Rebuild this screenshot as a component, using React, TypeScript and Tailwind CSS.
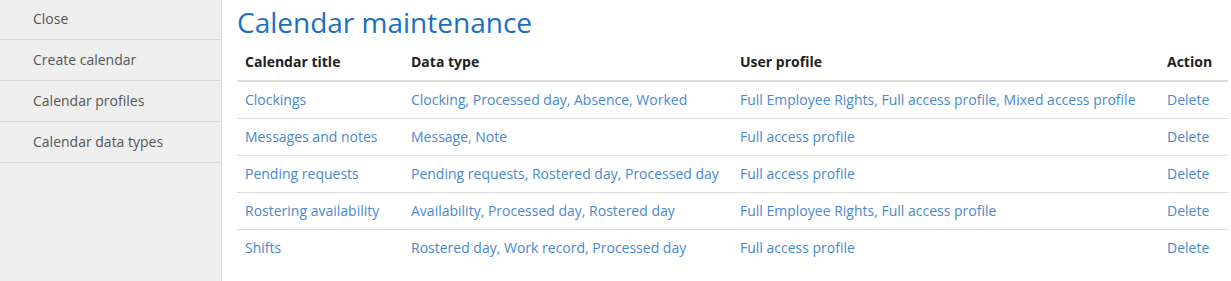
const rows = [
  {
    title: "Clockings",
    types: "Clocking, Processed day, Absence, Worked",
    profiles: "Full Employee Rights, Full access profile, Mixed access profile",
  },
  { title: "Messages and notes", types: "Message, Note", profiles: "Full access profile" },
  {
    title: "Pending requests",
    types: "Pending requests, Rostered day, Processed day",
    profiles: "Full access profile",
  },
  {
    title: "Rostering availability",
    types: "Availability, Processed day, Rostered day",
    profiles: "Full Employee Rights, Full access profile",
  },
  { title: "Shifts", types: "Rostered day, Work record, Processed day", profiles: "Full access profile" },
];

const menu = ["Close", "Create calendar", "Calendar profiles", "Calendar data types"];

export default function App() {
  return (
    <div className="flex h-[281px] w-[1231px] overflow-hidden bg-white font-['Open_Sans',sans-serif] text-[14px]">
      <aside className="w-[222px] shrink-0 border-r border-[#dcdcdc] bg-[#efefef]">
        <div className="-mt-px">
          {menu.map((item) => (
            <div
              key={item}
              className="h-[41px] border-b border-[#d9d9d9] pl-[33px] leading-[39px] text-[#555]"
            >
              {item}
            </div>
          ))}
        </div>
      </aside>

      <main className="flex-1 pl-[15px] pr-[3px] pt-[4px]">
        <h1 className="text-[28px] leading-[36px] text-[#1a6fc3]">Calendar maintenance</h1>
        <table className="mt-[4px] w-full table-fixed border-collapse">
          <colgroup>
            <col className="w-[166px]" />
            <col className="w-[329px]" />
            <col className="w-[427px]" />
            <col className="w-[69px]" />
          </colgroup>
          <thead>
            <tr className="border-b-2 border-[#dddddd] text-left text-[#222]">
              <th className="px-2 py-2 font-bold leading-5">Calendar title</th>
              <th className="px-2 py-2 font-bold leading-5">Data type</th>
              <th className="px-2 py-2 font-bold leading-5">User profile</th>
              <th className="px-2 py-2 font-bold leading-5">Action</th>
            </tr>
          </thead>
          <tbody className="text-[#4a88d0]">
            {rows.map((r, i) => (
              <tr key={r.title} className={i < rows.length - 1 ? "border-b border-[#dddddd]" : ""}>
                <td className="px-2 py-2 leading-5 whitespace-nowrap">{r.title}</td>
                <td className="px-2 py-2 leading-5 whitespace-nowrap">{r.types}</td>
                <td className="px-2 py-2 leading-5 whitespace-nowrap">{r.profiles}</td>
                <td className="px-2 py-2 leading-5">Delete</td>
              </tr>
            ))}
          </tbody>
        </table>
      </main>
    </div>
  );
}
